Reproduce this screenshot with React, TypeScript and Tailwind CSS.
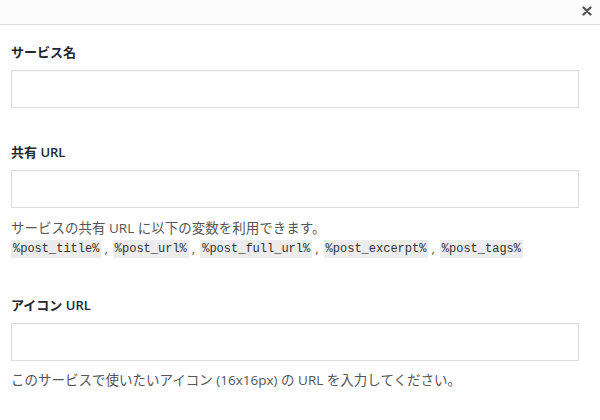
import React from "react";

const sans = { fontFamily: '"Open Sans", "Noto Sans CJK JP", sans-serif' };

const vars = ["%post_title%", "%post_url%", "%post_full_url%", "%post_excerpt%", "%post_tags%"];

function Field({ label }: { label: string }) {
  return (
    <>
      <div className="h-[20px] text-[13px] leading-[20px] font-semibold text-[#23282d]">{label}</div>
      <input
        type="text"
        className="mt-[8px] block h-[38px] w-[568px] border border-[#dddddd] bg-white shadow-[inset_0_1px_2px_rgba(0,0,0,0.04)] outline-none"
      />
    </>
  );
}

export default function App() {
  return (
    <div className="h-[420px] w-[600px] bg-white" style={sans}>
      <div className="flex h-[25px] items-center justify-end border-b border-[#dddddd] bg-[#fcfcfc] pr-[8px]">
        <svg width="10" height="10" viewBox="0 0 10 10" className="mb-[2px]">
          <path d="M1.5 1.5 L8.5 8.5 M8.5 1.5 L1.5 8.5" stroke="#555" strokeWidth="2.4" strokeLinecap="round" />
        </svg>
      </div>
      <div className="px-[11px] pt-[17px]">
        <Field label="サービス名" />
        <div className="h-[34px]" />
        <Field label="共有 URL" />
        <div className="mt-[10px] h-[20px] text-[13.5px] leading-[20px] text-[#555555]">
          サービスの共有 URL に以下の変数を利用できます。
        </div>
        <div className="mt-[1px] flex h-[20px] items-center text-[13px] text-[#555555]">
          {vars.map((v, i) => (
            <React.Fragment key={v}>
              <code
                className="bg-[#ececec] px-[2px] py-[1px] text-[12px] leading-[16px] text-[#333]"
                style={{ fontFamily: '"Liberation Mono", monospace' }}
              >
                {v}
              </code>
              {i < vars.length - 1 && <span className="ml-[3px] mr-[5px]">,</span>}
            </React.Fragment>
          ))}
        </div>
        <div className="h-[36px]" />
        <Field label="アイコン URL" />
        <div className="mt-[9px] h-[20px] text-[13.5px] leading-[20px] text-[#555555]">
          このサービスで使いたいアイコン (16x16px) の URL を入力してください。
        </div>
      </div>
    </div>
  );
}
